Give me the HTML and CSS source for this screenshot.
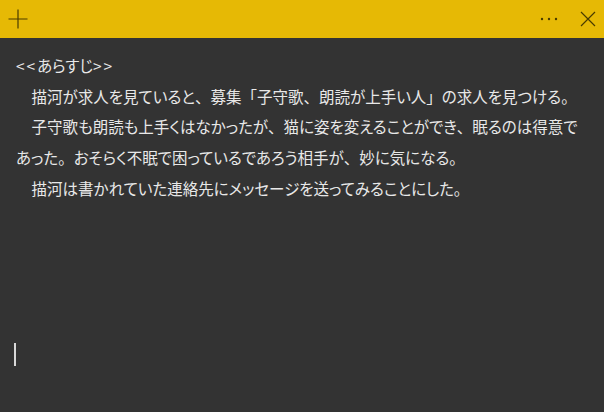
FILE: index.html
```html
<!DOCTYPE html>
<html lang="ja">
<head>
<meta charset="utf-8">
<link rel="stylesheet" href="styles.css">
</head>
<body>
<div class="note">
  <div class="titlebar">
    <button class="btn add" aria-label="新しいメモ">
      <svg width="20" height="20" viewBox="0 0 20 20"><path d="M10 0.5V19.5M0.5 10H19.5" stroke="#4a3c00" stroke-width="1.2" fill="none"/></svg>
    </button>
    <div class="spacer"></div>
    <button class="btn more" aria-label="メニュー">
      <svg width="20" height="4" viewBox="0 0 20 4"><circle cx="3" cy="2" r="1.2" fill="#4a3c00"/><circle cx="10" cy="2" r="1.2" fill="#4a3c00"/><circle cx="17" cy="2" r="1.2" fill="#4a3c00"/></svg>
    </button>
    <button class="btn close" aria-label="閉じる">
      <svg width="16" height="16" viewBox="0 0 16 16"><path d="M1 1L15 15M15 1L1 15" stroke="#4a3c00" stroke-width="1.2" fill="none"/></svg>
    </button>
  </div>
  <div class="content">
    <p class="line"><span class="br">&lt;&lt;</span>あらすじ<span class="br">&gt;&gt;</span></p>
    <p class="line">　描河が求人を見ていると<span class="pn">、</span>募集<span class="pn">「</span>子守歌<span class="pn">、</span>朗読が上手い人<span class="pn">」</span>の求人を見つける<span class="pn">。</span></p>
    <p class="line">　子守歌も朗読も上手くはなかったが<span class="pn">、</span>猫に姿を変えることができ<span class="pn">、</span>眠るのは得意で<br>あった<span class="pn">。</span>おそらく不眠で困っているであろう相手が<span class="pn">、</span>妙に気になる<span class="pn">。</span></p>
    <p class="line">　描河は書かれていた連絡先にメッセージを送ってみることにした<span class="pn">。</span></p>
    <div class="caret"></div>
  </div>
</div>
</body>
</html>
```
FILE: styles.css
```css
html, body {
  margin: 0;
  padding: 0;
  width: 604px;
  height: 412px;
  overflow: hidden;
  background: #333333;
}
.note {
  display: flex;
  flex-direction: column;
  width: 604px;
  height: 412px;
}
.titlebar {
  height: 38px;
  background: #e6b905;
  display: flex;
  align-items: center;
  flex-shrink: 0;
}
.btn {
  border: 0;
  background: transparent;
  padding: 0;
  margin: 0;
  display: flex;
  align-items: center;
  justify-content: center;
  height: 38px;
}
.add {
  width: 20px;
  margin-left: 8px;
}
.spacer { flex: 1; }
.more {
  width: 20px;
  margin-right: 21px;
}
.close {
  width: 16px;
  margin-right: 8px;
}
.content {
  flex: 1;
  padding: 12px 0 0 16px;
  color: #e8e8e8;
  font-family: "Noto Sans CJK JP", "Noto Sans", sans-serif;
  font-size: 15.5px;
  line-height: 30.7px;
  font-feature-settings: "palt";
}
.line {
  margin: 0;
  white-space: nowrap;
}
.pn {
  font-feature-settings: normal;
}
.br {
  letter-spacing: 2px;
}
.caret {
  width: 2px;
  height: 23px;
  background: #d8d8d8;
  margin: 139px 0 0 -2px;
}
```
